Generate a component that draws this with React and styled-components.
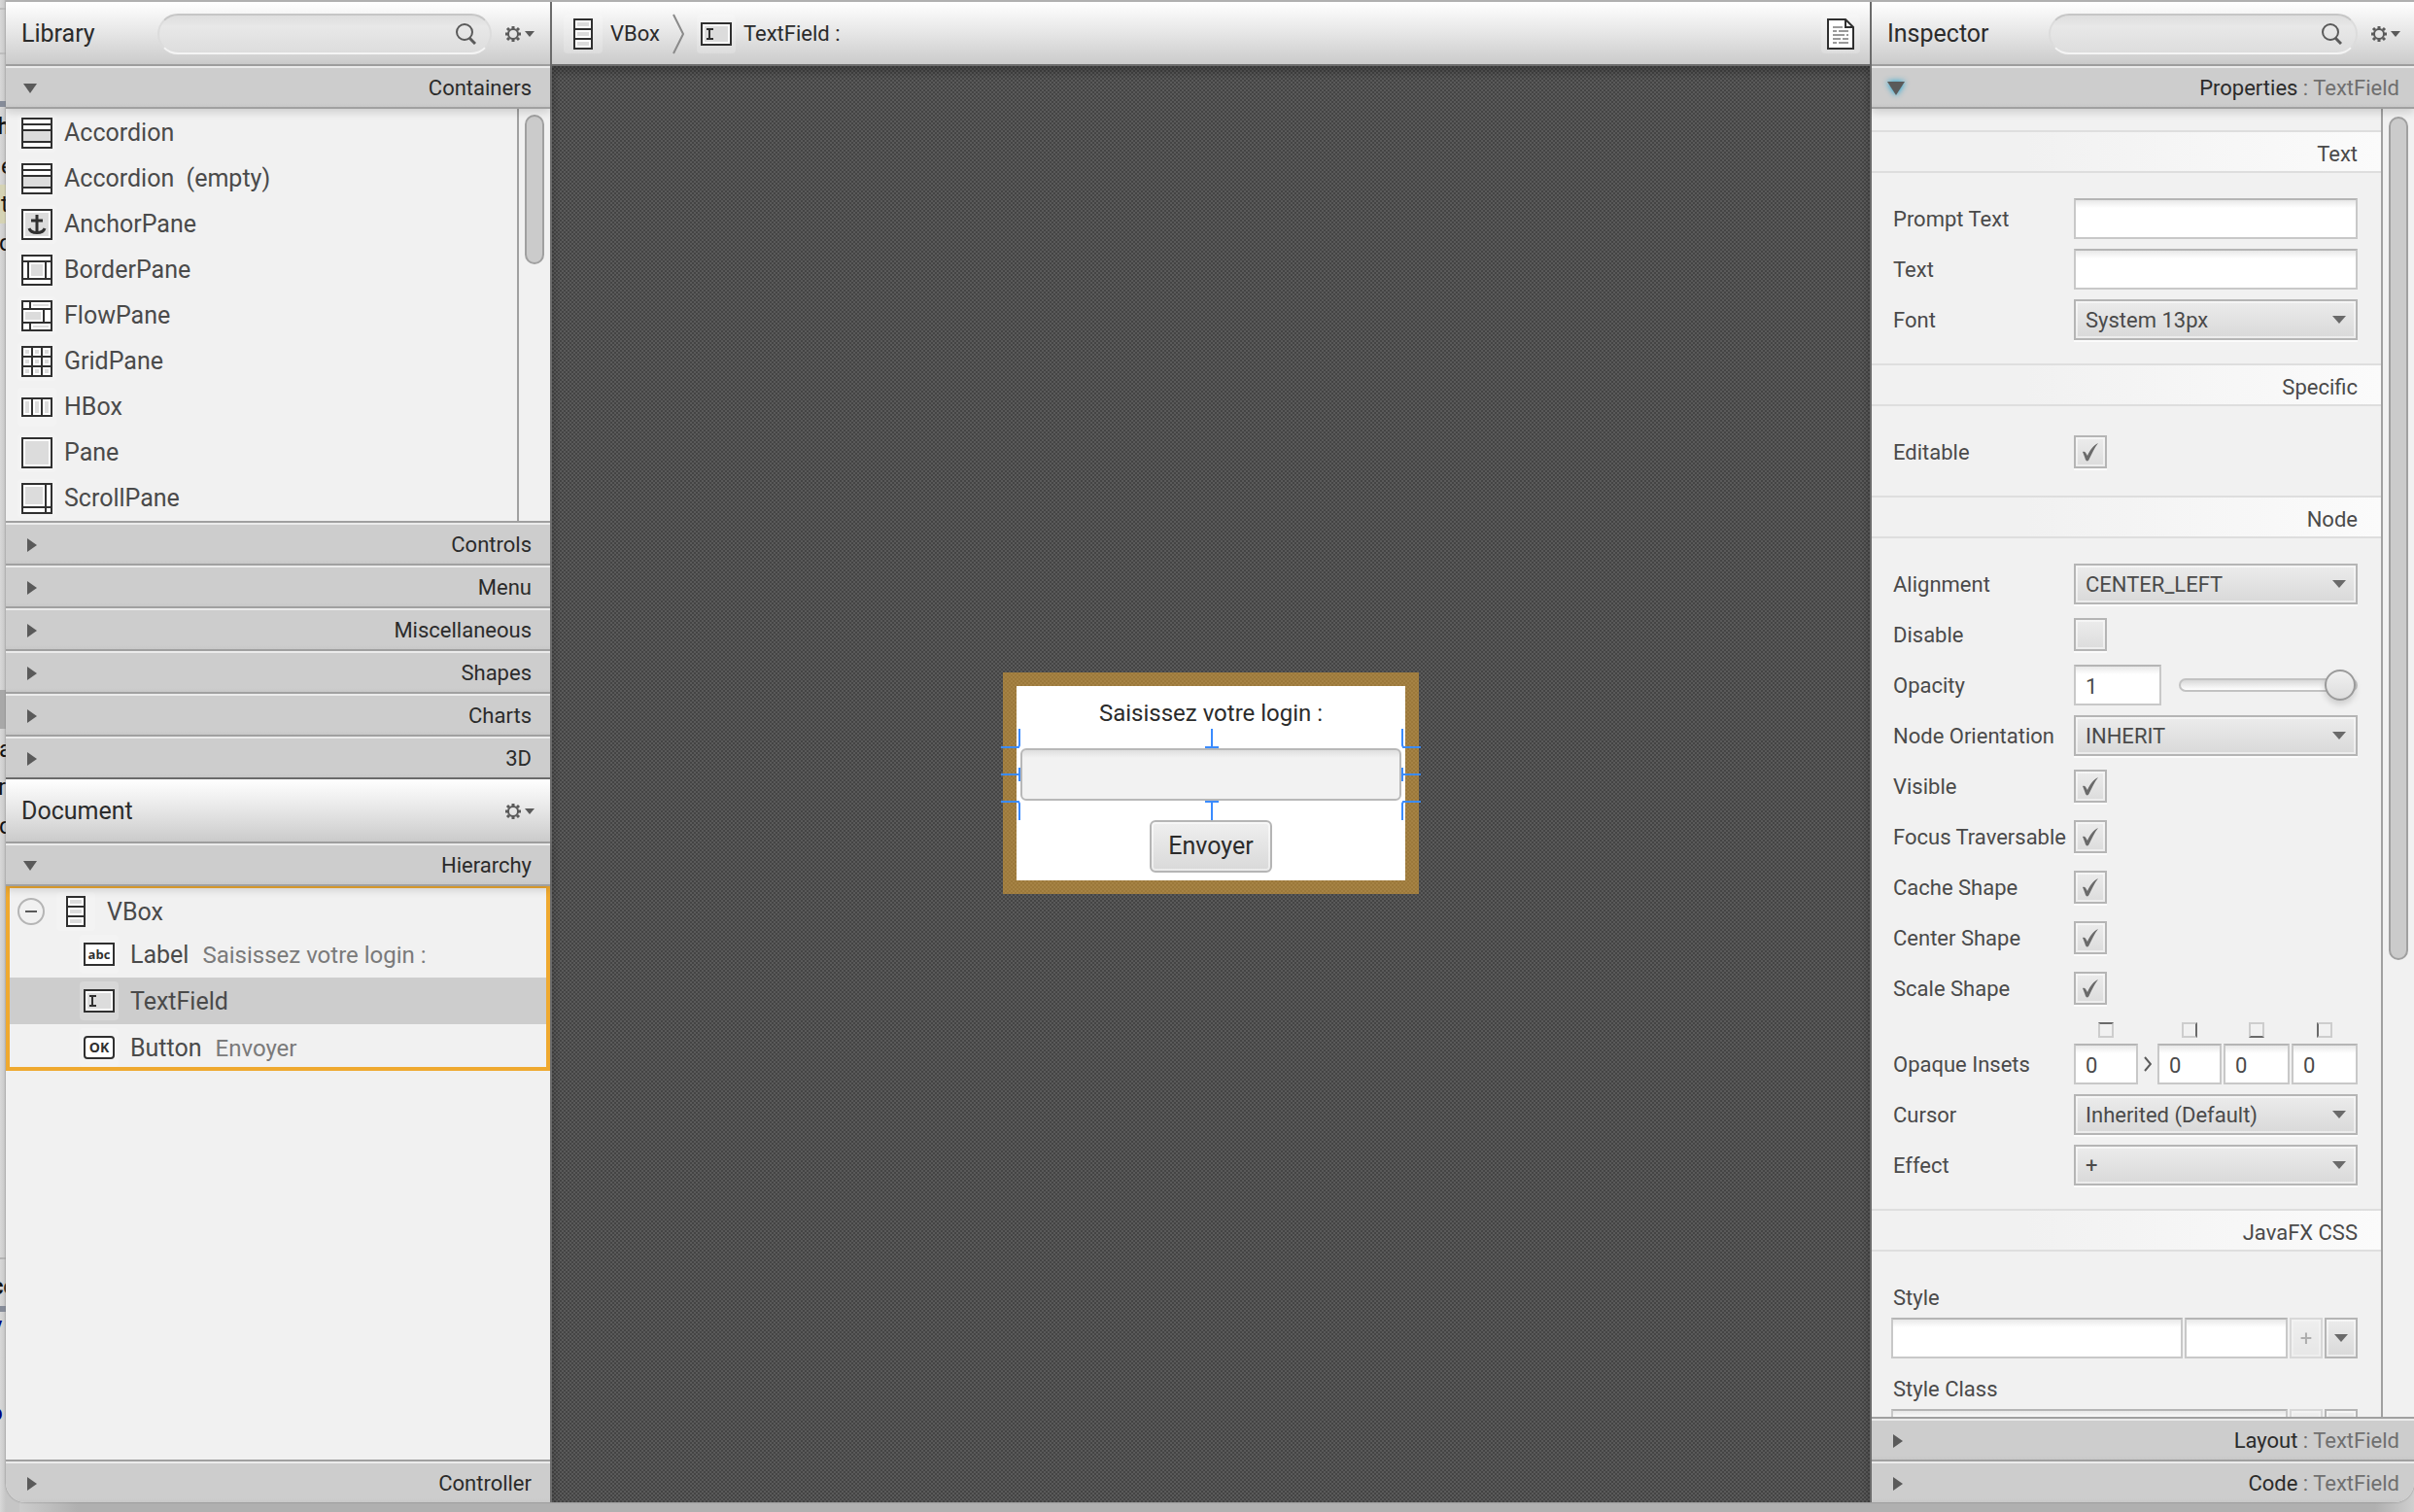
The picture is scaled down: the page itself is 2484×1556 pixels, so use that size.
import React from 'react'
import styled, { createGlobalStyle } from 'styled-components'

const GlobalStyle = createGlobalStyle`
    *, *::before, *::after {
        box-sizing: border-box;
    }
    body {
        margin: 0;
        background: #b4b4b4;
        color: #2b2b2b;
        font-family: Roboto, "Liberation Sans", sans-serif;
        font-size: 24px;
        line-height: 32px;
    }
    input, select, button {
        margin: 0;
        padding: 0;
        border-radius: 0;
        color: inherit;
        font: inherit;
    }
`

/* ---------- desktop and window ---------- */

const Desktop = styled.div`
    position: relative;
    display: flex;
    height: 100vh;
    padding: 0 0 10px 6px;
    overflow: hidden;
    background: linear-gradient(to right, #d6d6d6, #b0b0b0 80px, #b0b0b0 calc(100% - 40px), #cfcfcf);
`

const Behind = styled.div`
    position: absolute;
    top: 0;
    bottom: 0;
    left: 0;
    width: 20px;
    overflow: hidden;
    background: linear-gradient(to right, #d8d8d8, #c6c6c6 6px);
`

const Strip = styled.div`
    position: absolute;
    top: ${p => p.$top}px;
    left: 0;
    width: 100%;
    height: ${p => p.$height}px;
    background: ${p => p.$color};
`

const Letter = styled.span`
    position: absolute;
    top: ${p => p.$top}px;
    left: ${p => p.$left}px;
    color: ${p => p.$color || '#111'};
    font-weight: ${p => (p.$bold ? 700 : 400)};
`

const Window = styled.main`
    position: relative;
    flex: 1;
    display: grid;
    grid-template-columns: 560px minmax(0, 1fr) 560px;
    min-width: 0;
    min-height: 0;
    overflow: hidden;
    border-top: 2px solid #b0b0b0;
    border-radius: 0 0 20px 20px;
    background: #f1f1f1;
    box-shadow: 0 0 2px #777;
`

const Side = styled.aside`
    display: flex;
    flex-direction: column;
    min-width: 0;
    min-height: 0;
    border-left: ${p => (p.$divided ? '2px solid #6b6b6b' : '0')};
`

const Panel = styled.section`
    display: flex;
    flex-direction: column;
    flex: ${p => (p.$grow ? '1' : 'none')};
    min-height: 0;
    border-top: ${p => (p.$divided ? '2px solid #6b6b6b' : '0')};
`

const Header = styled.header`
    display: flex;
    flex: none;
    align-items: center;
    height: 66px;
    padding: 2px ${p => p.$right || 16}px 0 ${p => p.$left || 16}px;
    border-bottom: 2px solid ${p => (p.$dark ? '#6b6b6b' : '#a0a0a0')};
    background: linear-gradient(#ffffff, #e6e6e6 50%, #cbcbcb);
`

const Title = styled.h1`
    flex: 1;
    margin: 0;
    font-size: 25px;
    font-weight: 400;
`

const Search = styled.label`
    display: flex;
    align-items: center;
    width: ${p => p.$width}px;
    height: 42px;
    margin-right: 14px;
    padding: 0 14px 0 20px;
    border: 2px solid;
    border-color: #c6c6c6 #dcdcdc #f4f4f4;
    border-radius: 21px;
    background: linear-gradient(#dedede, #e8e8e8 30%, #dddddd);
`

const SearchInput = styled.input`
    flex: 1;
    min-width: 0;
    border: 0;
    outline: 0;
    background: none;
`

const GearButton = styled.button`
    display: flex;
    align-items: center;
    gap: 4px;
    border: 0;
    background: none;
`

/* ---------- titled panes ---------- */

const Bar = styled.button`
    position: relative;
    z-index: 1;
    display: flex;
    flex: none;
    align-items: center;
    justify-content: space-between;
    height: 44px;
    padding: 3px ${p => p.$right || 19}px 0 18px;
    border: 0;
    border-top: ${p => (p.$open ? '0' : '2px solid #a0a0a0')};
    border-bottom: ${p => (p.$open ? '2px solid #a0a0a0' : '0')};
    background: linear-gradient(#ebebeb 2px, #cdcdcd 2px, #cdcdcd 38px, #c8c8c8);
    box-shadow: ${p => (p.$open ? '0 4px 8px rgba(0, 0, 0, 0.14)' : 'none')};
    color: #2b2b2b;
    font-size: 22px;
    line-height: 28px;
    text-align: right;
`

const Muted = styled.span`
    color: #6f6f6f;
`

const ArrowBox = styled.span`
    display: flex;
    justify-content: center;
    width: ${p => (p.$open ? 14 : 18)}px;
    filter: ${p => (p.$focused ? 'drop-shadow(0 0 3px #039ed3)' : 'none')};
    > svg {
        flex: none;
    }
`

const ScrollArea = styled.div`
    display: flex;
    flex: ${p => (p.$height ? 'none' : '1')};
    height: ${p => (p.$height ? p.$height + 'px' : 'auto')};
    min-height: 0;
    overflow: hidden;
`

const ScrollBody = styled.div`
    flex: 1;
    min-width: 0;
    overflow: hidden;
`

const ScrollTrack = styled.div`
    width: ${p => p.$width}px;
    padding: ${p => p.$top || 6}px 0 0 6px;
    border-left: 2px solid #a0a0a0;
`

const ScrollThumb = styled.div`
    width: 20px;
    height: ${p => p.$height}px;
    border: 2px solid #a0a0a0;
    border-radius: 10px;
    background: #cbcbcb;
`

const List = styled.ul`
    margin: 0;
    padding: 0;
    list-style: none;
    color: #4a4a4a;
    font-size: 25px;
`

const ListItem = styled.li`
    display: flex;
    align-items: center;
    gap: 8px;
    height: 47px;
    padding: 2px 0 0 12px;
    white-space: pre;
`

/* ---------- hierarchy ---------- */

const Tree = styled.ul`
    margin: 0;
    padding: 0;
    border: 4px solid #efa92f;
    border-top-width: 2px;
    list-style: none;
    color: #4a4a4a;
    font-size: 25px;
`

const TreeItem = styled.li`
    display: flex;
    align-items: center;
    gap: 12px;
    height: ${p => (p.$edge ? 44 : 48)}px;
    padding-top: ${p => (p.$edge ? 4 : 0)}px;
    padding-left: ${p => (p.$child ? 72 : 8)}px;
    background: ${p => (p.$selected ? '#cdcdcd' : 'transparent')};
`

const Names = styled.span`
    display: flex;
    gap: 14px;
    padding-top: 2px;
`

const Info = styled.span`
    color: #7a7a7a;
    font-size: 24px;
`

const Spacer = styled.div`
    flex: 1;
`

/* ---------- editor ---------- */

const Editor = styled.section`
    display: flex;
    flex-direction: column;
    min-width: 0;
    border-left: 2px solid #6b6b6b;
`

const Crumbs = styled.nav`
    display: flex;
    flex: 1;
    align-items: center;
    gap: 8px;
    font-size: 22px;
`

const Chevron = styled.svg`
    margin: 0 5px;
`

const Canvas = styled.div`
    display: flex;
    flex: 1;
    align-items: center;
    justify-content: center;
    padding-bottom: 2px;
    background: repeating-conic-gradient(#444444 0 25%, #5a5a5a 0 50%) 0 0 / 4px 4px;
    box-shadow: inset 0 6px 8px rgba(0, 0, 0, 0.25);
`

const Frame = styled.div`
    padding: 14px;
    background: rgba(241, 171, 47, 0.5);
`

const Form = styled.form`
    position: relative;
    display: flex;
    flex-direction: column;
    align-items: center;
    gap: 20px;
    width: 400px;
    height: 200px;
    padding: 12px 4px 8px;
    background: #fff;
`

const LoginLabel = styled.label`
    height: 32px;
`

const LoginInput = styled.input`
    width: 100%;
    height: 54px;
    border: 2px solid #b8b8b8;
    border-radius: 6px;
    background: linear-gradient(#dedede, #f2f2f2 8px);
`

const SendButton = styled.button`
    width: 126px;
    height: 54px;
    border: 2px solid #b5b5b5;
    border-radius: 6px;
    background: linear-gradient(#efefef, #d9d9d9);
    box-shadow: inset 0 0 0 2px rgba(255, 255, 255, 0.5);
    font-size: 25px;
`

const Handles = styled.svg`
    position: absolute;
    top: 42px;
    left: -18px;
    pointer-events: none;
`

/* ---------- inspector ---------- */

const Section = styled.h2`
    height: 44px;
    margin: 0;
    padding: 9px 24px 0 0;
    border: solid #dedede;
    border-width: 2px 0;
    background: linear-gradient(to right, #f1f1f1 30%, #fbfbfb);
    font-size: 22px;
    font-weight: 400;
    line-height: 28px;
    text-align: right;
`

const Properties = styled.div`
    padding-top: 22px;
    color: #4a4a4a;
    font-size: 22px;
`

const Rows = styled.div`
    display: flex;
    flex-direction: column;
    gap: 10px;
    padding: 26px 24px 24px 20px;
`

const Row = styled.div`
    display: grid;
    grid-template-columns: 188px minmax(0, 1fr);
    align-items: ${p => (p.$end ? 'end' : 'center')};
    min-height: 42px;
`

const Name = styled.label`
    display: block;
    padding: 2px 0 0 2px;
    line-height: 40px;
    white-space: nowrap;
`

const Line = styled.div`
    display: flex;
    align-items: center;
    gap: ${p => p.$gap || 2}px;
`

const Field = styled.input`
    flex: ${p => (p.$width ? 'none' : '1')};
    width: ${p => (p.$width ? p.$width + 'px' : '100%')};
    min-width: 0;
    height: 42px;
    padding: 2px 0 0 10px;
    border: 2px solid #c8c8c8;
    border-top-color: #b5b5b5;
    outline: 0;
    background: linear-gradient(#e8e8e8, #ffffff 8px);
`

const Stack = styled.span`
    display: grid;
    align-items: center;
    > * {
        grid-area: 1 / 1;
    }
    > svg {
        justify-self: ${p => (p.$right ? 'end' : 'center')};
        margin-right: ${p => (p.$right ? 12 : 0)}px;
        pointer-events: none;
    }
`

const SelectBox = styled.select`
    width: 100%;
    height: 42px;
    padding: 2px 0 0 10px;
    appearance: none;
    border: 2px solid #b5b5b5;
    background: linear-gradient(#ececec, #d9d9d9);
    box-shadow: inset 0 0 0 2px rgba(255, 255, 255, 0.5), 0 2px #fbfbfb;
`

const CheckInput = styled.input`
    width: 34px;
    height: 34px;
    appearance: none;
    border: 2px solid #b5b5b5;
    background: linear-gradient(#ececec, #dcdcdc);
    box-shadow: inset 0 0 0 2px rgba(255, 255, 255, 0.5), 0 2px #fbfbfb;
`

const CheckCell = styled(Stack)`
    width: 34px;
`

const Slider = styled.input`
    flex: 1;
    min-width: 0;
    height: 32px;
    appearance: none;
    background: none;
    &::-webkit-slider-runnable-track {
        height: 14px;
        border: 2px solid #c2c2c2;
        border-radius: 7px;
        background: linear-gradient(#d8d8d8, #ffffff);
    }
    &::-webkit-slider-thumb {
        width: 32px;
        height: 32px;
        margin-top: -11px;
        appearance: none;
        border: 2px solid #9a9a9a;
        border-radius: 50%;
        background: linear-gradient(#f0f0f0, #dddddd);
        box-shadow: 0 4px 6px rgba(0, 0, 0, 0.15);
    }
`

const Insets = styled.div`
    display: grid;
    grid-template-columns: 66px 16px 66px 68px 68px;
    column-gap: 2px;
    row-gap: 6px;
    align-items: center;
    justify-items: center;
    padding-top: 4px;
`

const InsetMark = styled.span`
    width: 16px;
    height: 16px;
    border: 2px solid #cdcdcd;
    border-${p => p.$side}-color: #6a6a6a;
`

const SmallButton = styled.button`
    display: flex;
    align-items: center;
    justify-content: center;
    width: 34px;
    height: 42px;
    border: 2px solid #b5b5b5;
    background: linear-gradient(#ececec, #d9d9d9);
    box-shadow: inset 0 0 0 2px rgba(255, 255, 255, 0.5);
    &:disabled {
        padding-top: 2px;
        opacity: 0.4;
    }
`

/* ---------- drawings ---------- */

const ICONS = {
    accordion: (
        <>
            <rect x="5" y="5" width="30" height="30" />
            <path d="M5 11h30M5 17h30M5 29h30" />
            <path className="soft" d="M6 18h28v10H6z" />
        </>
    ),
    anchor: (
        <>
            <rect x="5" y="5" width="30" height="30" />
            <path className="soft" d="M8 8h24v24H8z" />
            <path className="thick" d="M20 10v18M14 16h12" />
            <path className="thick" d="M12 24c2 6 14 6 16 0" />
        </>
    ),
    border: (
        <>
            <rect x="5" y="5" width="30" height="30" />
            <path d="M5 11h30M5 29h30M11 11v18M29 11v18" />
            <path className="soft" d="M14 14h12v12H14z" />
        </>
    ),
    flow: (
        <>
            <rect x="5" y="5" width="30" height="30" />
            <path d="M5 13h30M5 27h30M13 5v8M27 13v14M13 27v8" />
            <path className="soft" d="M16 8h16v2H16zM8 16h16v8H8zM16 30h16v2H16z" />
        </>
    ),
    grid: (
        <>
            <rect x="5" y="5" width="30" height="30" />
            <path d="M5 15h30M5 25h30M15 5v30M25 5v30" />
            <path className="soft" d="M8 8h4v4H8zM18 8h4v4h-4zM28 8h4v4h-4zM8 18h4v4H8zM18 18h4v4h-4zM28 18h4v4h-4zM8 28h4v4H8zM18 28h4v4h-4zM28 28h4v4h-4z" />
        </>
    ),
    hbox: (
        <>
            <rect x="5" y="11" width="30" height="18" />
            <path d="M15 11v18M25 11v18" />
            <path className="soft" d="M8 14h4v12H8zM18 14h4v12h-4zM28 14h4v12h-4z" />
        </>
    ),
    vbox: (
        <>
            <rect x="11" y="5" width="18" height="30" />
            <path d="M11 15h18M11 25h18" />
            <path className="soft" d="M14 8h12v4H14zM14 18h12v4H14zM14 28h12v4H14z" />
        </>
    ),
    pane: (
        <>
            <rect x="5" y="5" width="30" height="30" />
            <path className="soft" d="M8 8h24v24H8z" />
        </>
    ),
    scroll: (
        <>
            <rect x="5" y="5" width="30" height="30" />
            <path d="M29 5v30M5 29h30" />
            <path className="soft" d="M8 8h18v18H8z" />
        </>
    ),
    label: (
        <>
            <rect x="5" y="9" width="30" height="22" />
            <text x="20" y="25" fontSize="13">abc</text>
        </>
    ),
    textField: (
        <>
            <rect x="5" y="9" width="30" height="22" />
            <path className="soft" d="M8 12h24v16H8z" />
            <path d="M10 15h7M10 25h7M13 15v10" />
        </>
    ),
    button: (
        <>
            <rect x="5" y="9" width="30" height="22" rx="3" />
            <text x="20" y="25" fontSize="14">OK</text>
        </>
    )
}

const IconSvg = styled.svg`
    flex: none;
    border-radius: 4px;
    background: rgba(255, 255, 255, 0.2);
    fill: #fff;
    stroke: #303030;
    stroke-width: 2;
    path {
        fill: none;
    }
    path.sheet {
        fill: #fff;
    }
    path.thick {
        stroke-width: 3;
    }
    path.soft {
        fill: #dcdcdc;
        stroke: none;
    }
    text {
        fill: #303030;
        stroke: none;
        font-family: "Open Sans", "Noto Sans", sans-serif;
        font-weight: 700;
        text-anchor: middle;
    }
`

const Icon = ({ name }) => (
    <IconSvg width="40" height="40" viewBox="0 0 40 40" aria-hidden="true">{ICONS[name]}</IconSvg>
)

const TRIANGLES = {
    right: [10, 14, 'M0 0l10 7-10 7z'],
    down: [14, 10, 'M0 0h14l-7 10z'],
    focused: [18, 14, 'M0 0h18l-9 14z'],
    menu: [14, 8, 'M0 0h14l-7 8z'],
    small: [10, 6, 'M0 0h10l-5 6z']
}

const Triangle = ({ kind, color = '#5a5a5a' }) => {
    const [width, height, path] = TRIANGLES[kind]
    return (
        <svg width={width} height={height} fill={color} aria-hidden="true"><path d={path} /></svg>
    )
}

const Magnifier = () => (
    <svg width="22" height="22" viewBox="0 0 22 22" fill="none" stroke="#5a5a5a" strokeWidth="2">
        <circle cx="10" cy="9" r="8" />
        <path d="M15 15l6 6" strokeWidth="3" />
    </svg>
)

const Gear = () => (
    <svg width="16" height="16" viewBox="0 0 16 16" fill="none" stroke="#5a5a5a">
        <circle cx="8" cy="8" r="5" strokeWidth="2" />
        <path d="M8 0v3M8 13v3M0 8h3M13 8h3M2 2l2 2M12 12l2 2M14 2l-2 2M4 12l-2 2" strokeWidth="3" />
    </svg>
)

const DocIcon = () => (
    <IconSvg width="40" height="40" viewBox="0 0 40 40" aria-hidden="true">
        <path className="sheet" d="M7 5h18l8 8v22H7z" />
        <path d="M25 5v8h8" />
        <path d="M12 13h10M12 17h4M18 17h10M12 21h12M26 21h2M12 25h8M22 25h6M12 29h4M18 29h10" stroke="#9a9a9a" />
    </IconSvg>
)

const CheckMark = () => (
    <svg width="18" height="20" viewBox="0 0 18 20" fill="#6a6a6a">
        <path d="M1 10c2-1 3 0 5 4C8 9 12 3 17 1c-4 5-6 10-9 16-1 3-3 3-4 1-1-3-2-6-3-8z" />
    </svg>
)

/* ---------- parts ---------- */

const GearMenu = () => (
    <GearButton type="button" aria-label="Options">
        <Gear />
        <Triangle kind="small" />
    </GearButton>
)

const SearchBox = ({ width, label }) => (
    <Search $width={width}>
        <SearchInput type="text" aria-label={label} />
        <Magnifier />
    </Search>
)

const TitledBar = ({ title, target, open, focused, right }) => (
    <Bar type="button" $open={open} $right={right} aria-expanded={!!open}>
        <ArrowBox $open={open} $focused={focused}>
            <Triangle kind={focused ? 'focused' : open ? 'down' : 'right'} />
        </ArrowBox>
        <span>{title}{target && <Muted> : {target}</Muted>}</span>
    </Bar>
)

const TextRow = ({ id, name }) => (
    <Row>
        <Name htmlFor={id}>{name}</Name>
        <Field id={id} type="text" />
    </Row>
)

const SelectRow = ({ id, name, value }) => (
    <Row>
        <Name htmlFor={id}>{name}</Name>
        <Stack $right>
            <SelectBox id={id}><option>{value}</option></SelectBox>
            <Triangle kind="menu" color="#6a6a6a" />
        </Stack>
    </Row>
)

const CheckRow = ({ id, name, checked }) => (
    <Row>
        <Name htmlFor={id}>{name}</Name>
        <CheckCell>
            <CheckInput id={id} type="checkbox" defaultChecked={checked} />
            {checked && <CheckMark />}
        </CheckCell>
    </Row>
)

const CONTAINERS = [
    ['accordion', 'Accordion'],
    ['accordion', 'Accordion  (empty)'],
    ['anchor', 'AnchorPane'],
    ['border', 'BorderPane'],
    ['flow', 'FlowPane'],
    ['grid', 'GridPane'],
    ['hbox', 'HBox'],
    ['pane', 'Pane'],
    ['scroll', 'ScrollPane']
]

const CLOSED = ['Controls', 'Menu', 'Miscellaneous', 'Shapes', 'Charts', '3D']

const CHILDREN = [
    { icon: 'label', name: 'Label', info: 'Saisissez votre login :' },
    { icon: 'textField', name: 'TextField', selected: true },
    { icon: 'button', name: 'Button', info: 'Envoyer', edge: true }
]

const Library = () => (
    <Panel>
        <Header>
            <Title>Library</Title>
            <SearchBox width={344} label="Search library" />
            <GearMenu />
        </Header>
        <TitledBar title="Containers" open />
        <ScrollArea $height={424}>
            <ScrollBody>
                <List>
                    {CONTAINERS.map(([icon, name]) => (
                        <ListItem key={name}><Icon name={icon} />{name}</ListItem>
                    ))}
                </List>
            </ScrollBody>
            <ScrollTrack $width={34}><ScrollThumb $height={154} /></ScrollTrack>
        </ScrollArea>
        {CLOSED.map(title => <TitledBar key={title} title={title} />)}
    </Panel>
)

const Document = () => (
    <Panel $grow $divided>
        <Header>
            <Title>Document</Title>
            <GearMenu />
        </Header>
        <TitledBar title="Hierarchy" open />
        <Tree>
            <TreeItem $edge>
                <svg width="28" height="28" viewBox="0 0 28 28" fill="none">
                    <circle cx="14" cy="14" r="13" stroke="#b5b5b5" strokeWidth="2" />
                    <path d="M8 14h12" stroke="#5a5a5a" strokeWidth="2" />
                </svg>
                <Icon name="vbox" />
                <Names>VBox</Names>
            </TreeItem>
            {CHILDREN.map(c => (
                <TreeItem key={c.name} $child $selected={c.selected} $edge={c.edge}>
                    <Icon name={c.icon} />
                    <Names>
                        <span>{c.name}</span>
                        {c.info && <Info>{c.info}</Info>}
                    </Names>
                </TreeItem>
            ))}
        </Tree>
        <Spacer />
        <TitledBar title="Controller" />
    </Panel>
)

const SelectionHandles = () => (
    <Handles width="436" height="98" viewBox="0 0 436 98" fill="none" stroke="#3a8bff" strokeWidth="2">
        <path d="M2 21h18l1-2V2M434 21h-18l-1-2V2M2 77h18l1 2v17M434 77h-18l-1 2v17" />
        <path d="M2 49h18M21 42v14M434 49h-18M415 42v14" />
        <path d="M219 2v18M212 21h14M219 96V78M212 77h14" />
    </Handles>
)

const ContentEditor = () => (
    <Editor>
        <Header $dark $left={12} $right={10}>
            <Crumbs>
                <Icon name="vbox" />
                <span>VBox</span>
                <Chevron width="12" height="42" viewBox="0 0 12 42" fill="none" stroke="#8a8a8a" strokeWidth="2">
                    <path d="M1 1l10 20L1 41" />
                </Chevron>
                <Icon name="textField" />
                <span>TextField :</span>
            </Crumbs>
            <DocIcon />
        </Header>
        <Canvas>
            <Frame>
                <Form onSubmit={e => e.preventDefault()}>
                    <LoginLabel htmlFor="login">Saisissez votre login :</LoginLabel>
                    <LoginInput id="login" type="text" />
                    <SendButton type="submit">Envoyer</SendButton>
                    <SelectionHandles />
                </Form>
            </Frame>
        </Canvas>
    </Editor>
)

const Inspector = () => (
    <Side $divided>
        <Header $right={14}>
            <Title>Inspector</Title>
            <SearchBox width={318} label="Search properties" />
            <GearMenu />
        </Header>
        <TitledBar title="Properties" target="TextField" open focused right={15} />
        <ScrollArea>
            <ScrollBody>
                <Properties>
                    <Section>Text</Section>
                    <Rows>
                        <TextRow id="prompt" name="Prompt Text" />
                        <TextRow id="text" name="Text" />
                        <SelectRow id="font" name="Font" value="System 13px" />
                    </Rows>
                    <Section>Specific</Section>
                    <Rows>
                        <CheckRow id="editable" name="Editable" checked />
                    </Rows>
                    <Section>Node</Section>
                    <Rows>
                        <SelectRow id="alignment" name="Alignment" value="CENTER_LEFT" />
                        <CheckRow id="disable" name="Disable" />
                        <Row>
                            <Name htmlFor="opacity">Opacity</Name>
                            <Line $gap={18}>
                                <Field id="opacity" type="text" defaultValue="1" $width={90} />
                                <Slider type="range" min="0" max="1" step="0.01" defaultValue="1" aria-label="Opacity" />
                            </Line>
                        </Row>
                        <SelectRow id="orientation" name="Node Orientation" value="INHERIT" />
                        <CheckRow id="visible" name="Visible" checked />
                        <CheckRow id="focus" name="Focus Traversable" checked />
                        <CheckRow id="cache" name="Cache Shape" checked />
                        <CheckRow id="center" name="Center Shape" checked />
                        <CheckRow id="scale" name="Scale Shape" checked />
                        <Row $end>
                            <Name htmlFor="inset-top">Opaque Insets</Name>
                            <Insets>
                                <InsetMark $side="top" />
                                <span />
                                <InsetMark $side="right" />
                                <InsetMark $side="bottom" />
                                <InsetMark $side="left" />
                                <Field id="inset-top" type="text" defaultValue="0" />
                                <svg width="8" height="16" viewBox="0 0 8 16" fill="none" stroke="#5a5a5a" strokeWidth="2">
                                    <path d="M1 1l6 7-6 7" />
                                </svg>
                                <Field type="text" defaultValue="0" aria-label="Right inset" />
                                <Field type="text" defaultValue="0" aria-label="Bottom inset" />
                                <Field type="text" defaultValue="0" aria-label="Left inset" />
                            </Insets>
                        </Row>
                        <SelectRow id="cursor" name="Cursor" value="Inherited (Default)" />
                        <SelectRow id="effect" name="Effect" value="+" />
                    </Rows>
                    <Section>JavaFX CSS</Section>
                    <Rows>
                        <div>
                            <Name htmlFor="style">Style</Name>
                            <Line>
                                <Field id="style" type="text" />
                                <Field type="text" aria-label="Style value" $width={106} />
                                <SmallButton type="button" disabled>+</SmallButton>
                                <SmallButton type="button" aria-label="Style menu"><Triangle kind="menu" color="#6a6a6a" /></SmallButton>
                            </Line>
                        </div>
                        <div>
                            <Name htmlFor="style-class">Style Class</Name>
                            <Line>
                                <Field id="style-class" type="text" />
                                <SmallButton type="button" disabled aria-label="Add style class" />
                                <SmallButton type="button" aria-label="Style class menu"><Triangle kind="menu" color="#6a6a6a" /></SmallButton>
                            </Line>
                        </div>
                    </Rows>
                </Properties>
            </ScrollBody>
            <ScrollTrack $width={34} $top={8}><ScrollThumb $height={868} /></ScrollTrack>
        </ScrollArea>
        <TitledBar title="Layout" target="TextField" right={15} />
        <TitledBar title="Code" target="TextField" right={15} />
    </Side>
)

const App = () => (
    <Desktop>
        <GlobalStyle />
        <Behind aria-hidden="true">
            <Strip $top={8} $height={2} $color="#bdbdbd" />
            <Strip $top={54} $height={2} $color="#bdbdbd" />
            <Strip $top={104} $height={6} $color="#868c99" />
            <Strip $top={190} $height={40} $color="#d5d3b4" />
            <Strip $top={710} $height={40} $color="#a8a8a8" />
            <Strip $top={1294} $height={2} $color="#b4b4b4" />
            <Strip $top={1344} $height={6} $color="#868c99" />
            <Letter $top={114} $left={-3} $bold>h</Letter>
            <Letter $top={155} $left={1}>e</Letter>
            <Letter $top={194} $left={1}>t</Letter>
            <Letter $top={234} $left={-1}>c</Letter>
            <Letter $top={755} $left={-1}>a</Letter>
            <Letter $top={794} $left={-2}>r</Letter>
            <Letter $top={834} $left={-1}>c</Letter>
            <Letter $top={1308} $left={-9} $bold>co</Letter>
            <Letter $top={1348} $left={-9} $color="#000080">y</Letter>
            <Letter $top={1438} $left={-11} $color="#000080" $bold>o</Letter>
        </Behind>
        <Window>
            <Side>
                <Library />
                <Document />
            </Side>
            <ContentEditor />
            <Inspector />
        </Window>
    </Desktop>
)

export default App
